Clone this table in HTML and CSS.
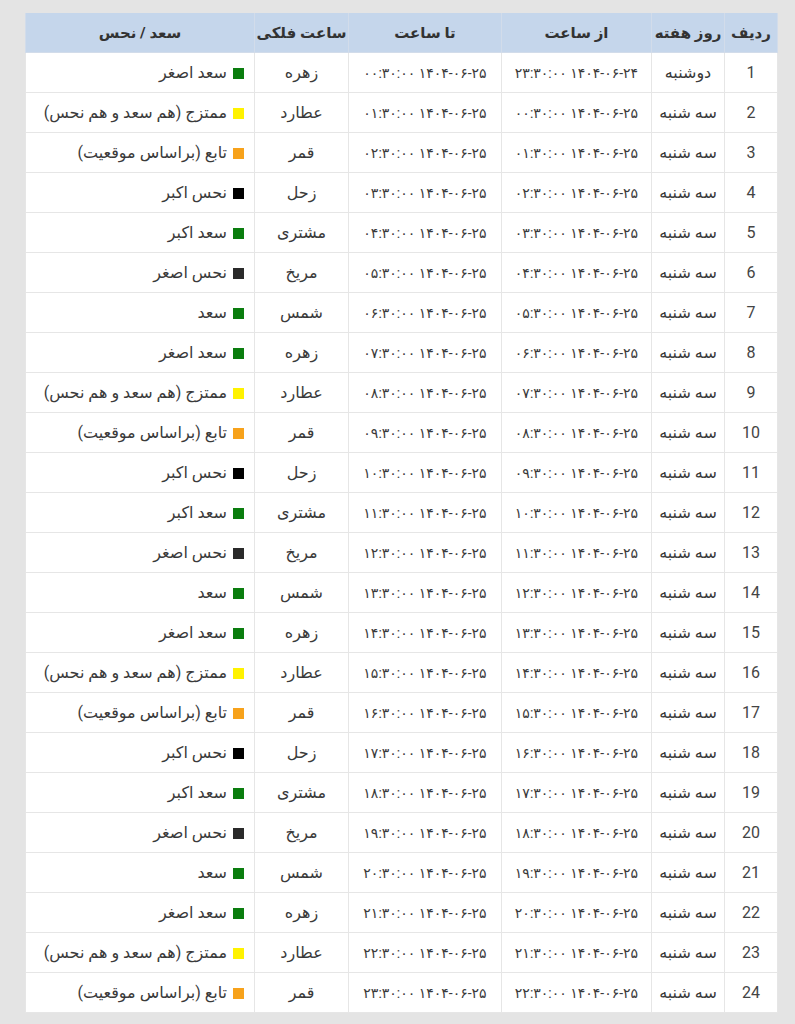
FILE: index.html
```html
<!DOCTYPE html>
<html lang="fa" dir="rtl">
<head>
<meta charset="utf-8">
<title>ساعات سعد و نحس</title>
<link rel="stylesheet" href="styles.css">
</head>
<body>
<table class="hours">
<colgroup>
<col class="c-num"><col class="c-day"><col class="c-from"><col class="c-to"><col class="c-planet"><col class="c-state">
</colgroup>
<thead>
<tr><th>ردیف</th><th>روز هفته</th><th>از ساعت</th><th>تا ساعت</th><th>ساعت فلکی</th><th>سعد / نحس</th></tr>
</thead>
<tbody>
<tr><td class="num">1</td><td>دوشنبه</td><td class="dt">۱۴۰۴-۰۶-۲۴ ۲۳:۳۰:۰۰</td><td class="dt">۱۴۰۴-۰۶-۲۵ ۰۰:۳۰:۰۰</td><td>زهره</td><td class="state"><span class="sq green"></span>سعد اصغر</td></tr>
<tr><td class="num">2</td><td>سه شنبه</td><td class="dt">۱۴۰۴-۰۶-۲۵ ۰۰:۳۰:۰۰</td><td class="dt">۱۴۰۴-۰۶-۲۵ ۰۱:۳۰:۰۰</td><td>عطارد</td><td class="state"><span class="sq yellow"></span>ممتزج (هم سعد و هم نحس)</td></tr>
<tr><td class="num">3</td><td>سه شنبه</td><td class="dt">۱۴۰۴-۰۶-۲۵ ۰۱:۳۰:۰۰</td><td class="dt">۱۴۰۴-۰۶-۲۵ ۰۲:۳۰:۰۰</td><td>قمر</td><td class="state"><span class="sq orange"></span>تابع (براساس موقعیت)</td></tr>
<tr><td class="num">4</td><td>سه شنبه</td><td class="dt">۱۴۰۴-۰۶-۲۵ ۰۲:۳۰:۰۰</td><td class="dt">۱۴۰۴-۰۶-۲۵ ۰۳:۳۰:۰۰</td><td>زحل</td><td class="state"><span class="sq black"></span>نحس اکبر</td></tr>
<tr><td class="num">5</td><td>سه شنبه</td><td class="dt">۱۴۰۴-۰۶-۲۵ ۰۳:۳۰:۰۰</td><td class="dt">۱۴۰۴-۰۶-۲۵ ۰۴:۳۰:۰۰</td><td>مشتری</td><td class="state"><span class="sq green"></span>سعد اکبر</td></tr>
<tr><td class="num">6</td><td>سه شنبه</td><td class="dt">۱۴۰۴-۰۶-۲۵ ۰۴:۳۰:۰۰</td><td class="dt">۱۴۰۴-۰۶-۲۵ ۰۵:۳۰:۰۰</td><td>مریخ</td><td class="state"><span class="sq dark"></span>نحس اصغر</td></tr>
<tr><td class="num">7</td><td>سه شنبه</td><td class="dt">۱۴۰۴-۰۶-۲۵ ۰۵:۳۰:۰۰</td><td class="dt">۱۴۰۴-۰۶-۲۵ ۰۶:۳۰:۰۰</td><td>شمس</td><td class="state"><span class="sq green"></span>سعد</td></tr>
<tr><td class="num">8</td><td>سه شنبه</td><td class="dt">۱۴۰۴-۰۶-۲۵ ۰۶:۳۰:۰۰</td><td class="dt">۱۴۰۴-۰۶-۲۵ ۰۷:۳۰:۰۰</td><td>زهره</td><td class="state"><span class="sq green"></span>سعد اصغر</td></tr>
<tr><td class="num">9</td><td>سه شنبه</td><td class="dt">۱۴۰۴-۰۶-۲۵ ۰۷:۳۰:۰۰</td><td class="dt">۱۴۰۴-۰۶-۲۵ ۰۸:۳۰:۰۰</td><td>عطارد</td><td class="state"><span class="sq yellow"></span>ممتزج (هم سعد و هم نحس)</td></tr>
<tr><td class="num">10</td><td>سه شنبه</td><td class="dt">۱۴۰۴-۰۶-۲۵ ۰۸:۳۰:۰۰</td><td class="dt">۱۴۰۴-۰۶-۲۵ ۰۹:۳۰:۰۰</td><td>قمر</td><td class="state"><span class="sq orange"></span>تابع (براساس موقعیت)</td></tr>
<tr><td class="num">11</td><td>سه شنبه</td><td class="dt">۱۴۰۴-۰۶-۲۵ ۰۹:۳۰:۰۰</td><td class="dt">۱۴۰۴-۰۶-۲۵ ۱۰:۳۰:۰۰</td><td>زحل</td><td class="state"><span class="sq black"></span>نحس اکبر</td></tr>
<tr><td class="num">12</td><td>سه شنبه</td><td class="dt">۱۴۰۴-۰۶-۲۵ ۱۰:۳۰:۰۰</td><td class="dt">۱۴۰۴-۰۶-۲۵ ۱۱:۳۰:۰۰</td><td>مشتری</td><td class="state"><span class="sq green"></span>سعد اکبر</td></tr>
<tr><td class="num">13</td><td>سه شنبه</td><td class="dt">۱۴۰۴-۰۶-۲۵ ۱۱:۳۰:۰۰</td><td class="dt">۱۴۰۴-۰۶-۲۵ ۱۲:۳۰:۰۰</td><td>مریخ</td><td class="state"><span class="sq dark"></span>نحس اصغر</td></tr>
<tr><td class="num">14</td><td>سه شنبه</td><td class="dt">۱۴۰۴-۰۶-۲۵ ۱۲:۳۰:۰۰</td><td class="dt">۱۴۰۴-۰۶-۲۵ ۱۳:۳۰:۰۰</td><td>شمس</td><td class="state"><span class="sq green"></span>سعد</td></tr>
<tr><td class="num">15</td><td>سه شنبه</td><td class="dt">۱۴۰۴-۰۶-۲۵ ۱۳:۳۰:۰۰</td><td class="dt">۱۴۰۴-۰۶-۲۵ ۱۴:۳۰:۰۰</td><td>زهره</td><td class="state"><span class="sq green"></span>سعد اصغر</td></tr>
<tr><td class="num">16</td><td>سه شنبه</td><td class="dt">۱۴۰۴-۰۶-۲۵ ۱۴:۳۰:۰۰</td><td class="dt">۱۴۰۴-۰۶-۲۵ ۱۵:۳۰:۰۰</td><td>عطارد</td><td class="state"><span class="sq yellow"></span>ممتزج (هم سعد و هم نحس)</td></tr>
<tr><td class="num">17</td><td>سه شنبه</td><td class="dt">۱۴۰۴-۰۶-۲۵ ۱۵:۳۰:۰۰</td><td class="dt">۱۴۰۴-۰۶-۲۵ ۱۶:۳۰:۰۰</td><td>قمر</td><td class="state"><span class="sq orange"></span>تابع (براساس موقعیت)</td></tr>
<tr><td class="num">18</td><td>سه شنبه</td><td class="dt">۱۴۰۴-۰۶-۲۵ ۱۶:۳۰:۰۰</td><td class="dt">۱۴۰۴-۰۶-۲۵ ۱۷:۳۰:۰۰</td><td>زحل</td><td class="state"><span class="sq black"></span>نحس اکبر</td></tr>
<tr><td class="num">19</td><td>سه شنبه</td><td class="dt">۱۴۰۴-۰۶-۲۵ ۱۷:۳۰:۰۰</td><td class="dt">۱۴۰۴-۰۶-۲۵ ۱۸:۳۰:۰۰</td><td>مشتری</td><td class="state"><span class="sq green"></span>سعد اکبر</td></tr>
<tr><td class="num">20</td><td>سه شنبه</td><td class="dt">۱۴۰۴-۰۶-۲۵ ۱۸:۳۰:۰۰</td><td class="dt">۱۴۰۴-۰۶-۲۵ ۱۹:۳۰:۰۰</td><td>مریخ</td><td class="state"><span class="sq dark"></span>نحس اصغر</td></tr>
<tr><td class="num">21</td><td>سه شنبه</td><td class="dt">۱۴۰۴-۰۶-۲۵ ۱۹:۳۰:۰۰</td><td class="dt">۱۴۰۴-۰۶-۲۵ ۲۰:۳۰:۰۰</td><td>شمس</td><td class="state"><span class="sq green"></span>سعد</td></tr>
<tr><td class="num">22</td><td>سه شنبه</td><td class="dt">۱۴۰۴-۰۶-۲۵ ۲۰:۳۰:۰۰</td><td class="dt">۱۴۰۴-۰۶-۲۵ ۲۱:۳۰:۰۰</td><td>زهره</td><td class="state"><span class="sq green"></span>سعد اصغر</td></tr>
<tr><td class="num">23</td><td>سه شنبه</td><td class="dt">۱۴۰۴-۰۶-۲۵ ۲۱:۳۰:۰۰</td><td class="dt">۱۴۰۴-۰۶-۲۵ ۲۲:۳۰:۰۰</td><td>عطارد</td><td class="state"><span class="sq yellow"></span>ممتزج (هم سعد و هم نحس)</td></tr>
<tr><td class="num">24</td><td>سه شنبه</td><td class="dt">۱۴۰۴-۰۶-۲۵ ۲۲:۳۰:۰۰</td><td class="dt">۱۴۰۴-۰۶-۲۵ ۲۳:۳۰:۰۰</td><td>قمر</td><td class="state"><span class="sq orange"></span>تابع (براساس موقعیت)</td></tr>
</tbody>
</table>
</body>
</html>
```
FILE: styles.css
```css
html, body {
  margin: 0;
  padding: 0;
  background: #e4e4e4;
}
body {
  padding: 13px 17px 0 26px;
  font-family: Roboto, "DejaVu Sans", sans-serif;
  color: #3a3a3a;
}
.hours {
  width: 752px;
  table-layout: fixed;
  border-collapse: collapse;
  background: #fff;
}
.c-num { width: 53px; }
.c-day { width: 73px; }
.c-from { width: 150px; }
.c-to { width: 153px; }
.c-planet { width: 94px; }
.c-state { width: 229px; }
.hours th {
  background: #c5d6eb;
  height: 39px;
  padding: 0;
  font-size: 15px;
  font-weight: bold;
  color: #333;
  text-align: center;
  border: 1px solid #d2dcea;
  border-top: none;
}
.hours td {
  height: 39px;
  padding: 0;
  font-size: 16px;
  text-align: center;
  border: 1px solid #e6e6e6;
  white-space: nowrap;
}
.hours td.num {
  font-size: 16px;
  color: #444;
}
.hours td.dt {
  font-size: 14px;
}
.hours td.state {
  text-align: right;
  padding-right: 10px;
}
.sq {
  display: inline-block;
  width: 11px;
  height: 11px;
  margin-left: 6px;
  vertical-align: -1px;
}
.green { background: #0a7d0e; }
.yellow { background: #fff200; }
.orange { background: #f7a21b; }
.black { background: #000; }
.dark { background: #2a2a2a; }
```
